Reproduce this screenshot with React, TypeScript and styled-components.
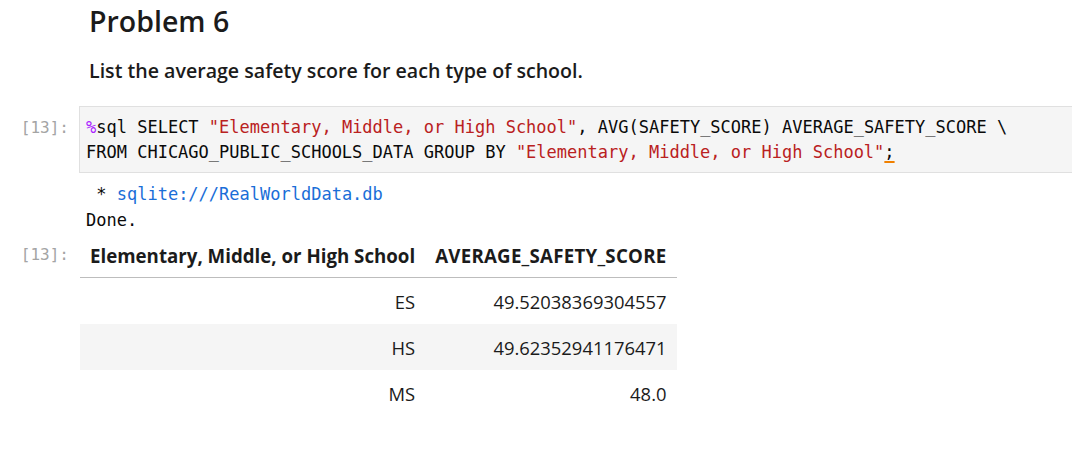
import React from "react";
import styled, { createGlobalStyle } from "styled-components";

const Global = createGlobalStyle`
  html, body { margin: 0; padding: 0; background: #ffffff; }
  body { font-family: "Open Sans", "Noto Sans", sans-serif; color: #000; }
`;

const Notebook = styled.div`
  display: flex;
  flex-direction: column;
  width: 1072px;
  height: 451px;
  overflow: hidden;
`;

const MarkdownCell = styled.div`
  padding: 0 0 0 89px;
`;

const Heading = styled.h2`
  margin: 0;
  padding-top: 1px;
  font-size: 28.5px;
  font-weight: 600;
  line-height: 40px;
  color: #1b1b1b;
`;

const Para = styled.p`
  margin: 17px 0 0;
  font-size: 19.6px;
  font-weight: 600;
  line-height: 26px;
  color: #1b1b1b;
`;

const Row = styled.div<{ $mt?: number }>`
  display: grid;
  grid-template-columns: 79px 1fr;
  margin-top: ${(p) => p.$mt ?? 0}px;
`;

const Prompt = styled.div<{ $pt?: number }>`
  font-family: "DejaVu Sans Mono", "Liberation Mono", monospace;
  font-size: 16px;
  color: #a4a4a4;
  text-align: right;
  padding: ${(p) => p.$pt ?? 0}px 10px 0 0;
  line-height: 25px;
`;

const Editor = styled.div`
  background: #f5f5f5;
  border: 1px solid #e0e0e0;
  border-right: none;
  padding: 8px 0 7px 6px;
  font-family: "DejaVu Sans Mono", "Liberation Mono", monospace;
  font-size: 17px;
  line-height: 25px;
  white-space: pre;
  color: #0a0a0a;
`;

const Magic = styled.span`
  color: #aa22ff;
`;
const Str = styled.span`
  color: #ba2121;
`;
const Semi = styled.span`
  text-decoration: underline;
  text-decoration-color: #f08000;
  text-decoration-thickness: 2px;
  text-underline-offset: 3px;
`;

const Stream = styled.div`
  font-family: "DejaVu Sans Mono", "Liberation Mono", monospace;
  font-size: 17px;
  line-height: 26px;
  white-space: pre;
  padding-left: 7px;
  color: #0a0a0a;
`;

const Link = styled.span`
  color: #1a6ed8;
`;

const Table = styled.table`
  border-collapse: collapse;
  font-size: 18.4px;
  color: #1b1b1b;
  margin: 0 0 0 1px;
`;

const Th = styled.th<{ $spacing?: number }>`
  font-weight: 700;
  font-size: 18.7px;
  letter-spacing: ${(p) => p.$spacing ?? 0}px;
  text-align: left;
  padding: 0 10px;
  height: 44px;
  border-bottom: 1px solid #bdbdbd;
  white-space: nowrap;
`;

const Tr = styled.tr<{ $alt?: boolean }>`
  background: ${(p) => (p.$alt ? "#f5f5f5" : "transparent")};
`;

const Td = styled.td`
  text-align: right;
  padding: 0 10px;
  height: 46px;
  font-weight: 400;
`;

const rows = [
  ["ES", "49.52038369304557"],
  ["HS", "49.62352941176471"],
  ["MS", "48.0"],
];

export default function App() {
  return (
    <>
      <Global />
      <Notebook>
        <MarkdownCell>
          <Heading>Problem 6</Heading>
          <Para>List the average safety score for each type of school.</Para>
        </MarkdownCell>
        <Row $mt={22}>
          <Prompt $pt={9}>[13]:</Prompt>
          <Editor>
            <Magic>%</Magic>sql SELECT <Str>"Elementary, Middle, or High School"</Str>, AVG(SAFETY_SCORE) AVERAGE_SAFETY_SCORE \{"\n"}FROM CHICAGO_PUBLIC_SCHOOLS_DATA GROUP BY <Str>"Elementary, Middle, or High School"</Str><Semi>;</Semi>
          </Editor>
        </Row>
        <Row $mt={8}>
          <div />
          <Stream>
            {" * "}<Link>sqlite:///RealWorldData.db</Link>{"\n"}Done.
          </Stream>
        </Row>
        <Row $mt={0}>
          <Prompt $pt={9}>[13]:</Prompt>
          <div>
            <Table>
              <thead>
                <tr>
                  <Th>Elementary, Middle, or High School</Th>
                  <Th $spacing={0.25}>AVERAGE_SAFETY_SCORE</Th>
                </tr>
              </thead>
              <tbody>
                {rows.map((r, i) => (
                  <Tr key={r[0]} $alt={i % 2 === 1}>
                    <Td>{r[0]}</Td>
                    <Td>{r[1]}</Td>
                  </Tr>
                ))}
              </tbody>
            </Table>
          </div>
        </Row>
      </Notebook>
    </>
  );
}
